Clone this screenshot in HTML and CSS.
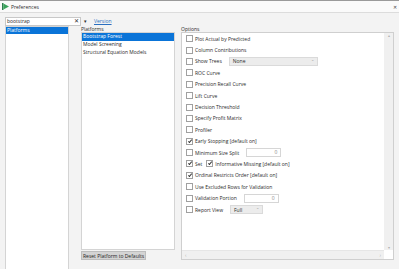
FILE: index.html
```html
<!DOCTYPE html>
<html lang="en">
<head>
    <meta charset="UTF-8">
    <title>Preferences</title>
    <link rel="stylesheet" href="styles.css">
</head>
<body>

    <!-- Title bar -->
    <div class="titlebar">
        <svg class="app-icon" width="7" height="7" viewBox="0 0 7 7">
            <rect x="0" y="0" width="1.4" height="7" fill="#2f7d4f"/>
            <polygon points="1.4,0.5 7,3.5 1.4,6.5" fill="#3aa35c"/>
        </svg>
        <span class="title">Preferences</span>
        <span class="close">&#10005;</span>
    </div>

    <div class="content">
        <!-- Search row -->
        <div class="search-row">
            <div class="search">
                <span class="search-text">bootstrap</span>
                <span class="clear">&#10005;</span>
            </div>
            <span class="drop">&#9662;</span>
            <a class="version" href="#">Version</a>
        </div>

        <div class="panes">
            <!-- Categories -->
            <div class="categories">
                <div class="item selected">Platforms</div>
            </div>

            <!-- Platforms -->
            <div class="platforms">
                <div class="label">Platforms</div>
                <div class="list">
                    <div class="item selected">Bootstrap Forest</div>
                    <div class="item">Model Screening</div>
                    <div class="item">Structural Equation Models</div>
                </div>
                <button class="reset">Reset Platform to Defaults</button>
            </div>

            <!-- Options -->
            <div class="options">
                <div class="label">Options</div>
                <div class="options-box">
                    <div class="options-main">
                        <div class="opts">
                            <div class="row"><span class="cb"></span>Plot Actual by Predicted</div>
                            <div class="row"><span class="cb"></span>Column Contributions</div>
                            <div class="row"><span class="cb"></span>Show Trees<span class="select wide">None<span class="caret">&#8964;</span></span></div>
                            <div class="row"><span class="cb"></span>ROC Curve</div>
                            <div class="row"><span class="cb"></span>Precision Recall Curve</div>
                            <div class="row"><span class="cb"></span>Lift Curve</div>
                            <div class="row"><span class="cb"></span>Decision Threshold</div>
                            <div class="row"><span class="cb"></span>Specify Profit Matrix</div>
                            <div class="row"><span class="cb"></span>Profiler</div>
                            <div class="row"><span class="cb checked"></span>Early Stopping [default on]</div>
                            <div class="row"><span class="cb"></span>Minimum Size Split<span class="num">0</span></div>
                            <div class="row"><span class="cb checked"></span>Set<span class="cb checked gap"></span>Informative Missing [default on]</div>
                            <div class="row"><span class="cb checked"></span>Ordinal Restricts Order [default on]</div>
                            <div class="row"><span class="cb"></span>Use Excluded Rows for Validation</div>
                            <div class="row"><span class="cb"></span>Validation Portion<span class="num">0</span></div>
                            <div class="row"><span class="cb"></span>Report View<span class="select short">Full<span class="caret">&#8964;</span></span></div>
                        </div>
                        <div class="vscroll">
                            <span class="arrow">&#9652;</span>
                            <span class="arrow">&#9662;</span>
                        </div>
                    </div>
                    <div class="hscroll">
                        <span class="arrow">&#8249;</span>
                        <span class="arrow">&#8250;</span>
                    </div>
                </div>
            </div>
        </div>
    </div>

</body>
</html>
```

FILE: styles.css
```css
/* General page styles */
body, html {
    margin: 0;
    padding: 0;
    height: 100%;
    overflow: hidden;
    background-color: #f3f3f3;
    font-family: 'Open Sans', sans-serif;
    font-size: 5px;
    color: #2a2a2a;
}

/* Title bar */
.titlebar {
    height: 11px;
    display: flex;
    align-items: center;
    padding: 0 2px;
    background-color: #fafafa;
    border-top: 1px solid #9a9a9a;
    border-bottom: 1px solid #dcdcdc;
}

.app-icon {
    margin-right: 2px;
}

.title {
    flex: 1;
    font-size: 5px;
}

.close {
    font-size: 5px;
    color: #444;
}

/* Search row */
.search-row {
    display: flex;
    align-items: center;
    height: 10px;
    margin-top: 3px;
    padding-left: 5px;
}

.search {
    width: 76px;
    height: 9px;
    box-sizing: border-box;
    background-color: white;
    border: 1px solid #c8c8c8;
    display: flex;
    align-items: center;
    padding: 0 1px 0 1px;
}

.search-text {
    flex: 1;
}

.clear {
    font-size: 6px;
    color: #333;
}

.drop {
    font-size: 5px;
    margin-left: 3px;
}

.version {
    margin-left: 7px;
    color: #2a6ec0;
}

/* Panes */
.panes {
    display: flex;
    height: 250px;
    padding-left: 5px;
}

.categories {
    width: 64px;
    box-sizing: border-box;
    background-color: white;
    border: 1px solid #d4d4d4;
    border-bottom: none;
}

.item {
    height: 7.8px;
    line-height: 7.8px;
    padding-left: 1px;
    white-space: nowrap;
}

.categories .item {
    height: 7px;
    line-height: 7px;
}

.item.selected {
    background-color: #0a74d8;
    color: white;
}

.label {
    height: 6px;
    line-height: 6px;
}

.platforms {
    width: 94px;
    margin-left: 12px;
    display: flex;
    flex-direction: column;
}

.list {
    height: 218px;
    box-sizing: border-box;
    background-color: white;
    border: 1px solid #d4d4d4;
}

.reset {
    align-self: flex-start;
    margin-top: 1px;
    height: 9px;
    padding: 0 1px;
    border: 1px solid #bdbdbd;
    background-color: #d4d4d4;
    font-family: inherit;
    font-size: 5px;
    color: #222;
}

/* Options */
.options {
    width: 213px;
    margin-left: 6px;
    display: flex;
    flex-direction: column;
}

.options-box {
    height: 228px;
    box-sizing: border-box;
    border: 1px solid #cfcfcf;
    background-color: white;
    display: flex;
    flex-direction: column;
}

.options-main {
    flex: 1;
    display: flex;
}

.opts {
    flex: 1;
    padding-left: 4px;
}

.row {
    height: 11.4px;
    display: flex;
    align-items: center;
    white-space: nowrap;
}

.cb {
    width: 5px;
    height: 5px;
    border: 1px solid #a0a0a0;
    background-color: white;
    margin-right: 2px;
    position: relative;
}

.cb.checked::after {
    content: "";
    position: absolute;
    left: 1.6px;
    top: 0;
    width: 1.4px;
    height: 3px;
    border-right: 1px solid #333;
    border-bottom: 1px solid #333;
    transform: rotate(40deg);
}

.cb.gap {
    margin-left: 4px;
}

.select {
    margin-left: 7px;
    height: 9px;
    box-sizing: border-box;
    background-color: #ececec;
    border: 1px solid #dadada;
    display: flex;
    align-items: center;
    padding-left: 3px;
    position: relative;
}

.select.wide {
    width: 89px;
}

.select.short {
    width: 33px;
}

.caret {
    position: absolute;
    right: 3px;
    top: -1px;
    color: #999;
    font-size: 4px;
}

.num {
    margin-left: 7px;
    width: 35px;
    height: 9px;
    box-sizing: border-box;
    border: 1px solid #d6d6d6;
    background-color: white;
    text-align: right;
    padding-right: 3px;
    line-height: 7px;
    color: #888;
}

.vscroll {
    width: 9px;
    background-color: #f0f0f0;
    display: flex;
    flex-direction: column;
    justify-content: space-between;
    align-items: center;
    font-size: 4px;
    color: #b0b0b0;
}

.hscroll {
    height: 8px;
    margin-right: 9px;
    background-color: #f0f0f0;
    border-top: 1px solid #e6e6e6;
    display: flex;
    justify-content: space-between;
    align-items: center;
    padding: 0 3px;
    font-size: 5px;
    color: #b0b0b0;
}
```
